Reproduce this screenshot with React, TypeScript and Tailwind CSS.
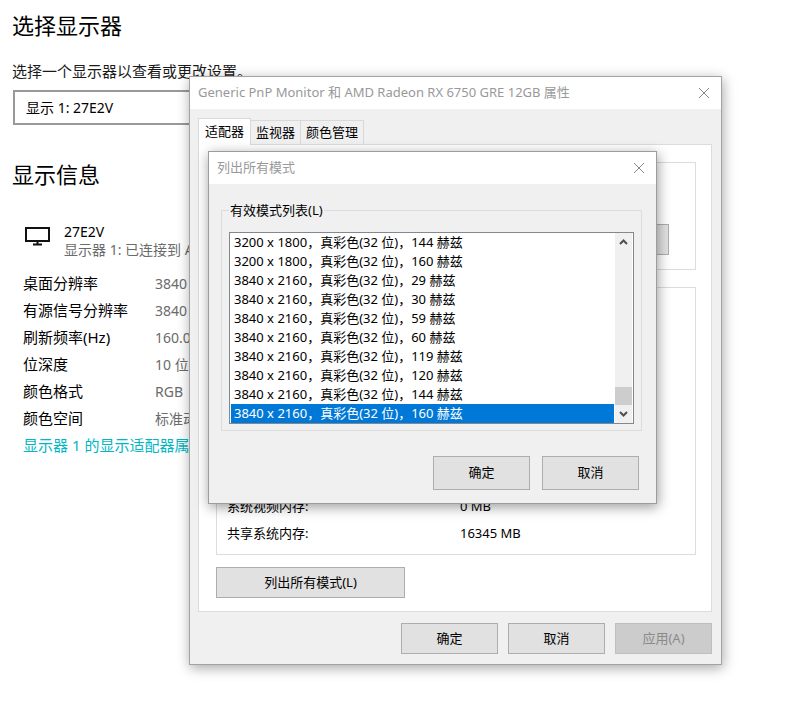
/**
 * Display settings page with the adapter property sheet and its
 * "list all modes" dialog open on top.
 */

import React, { useState } from "react";

interface DisplayRow {
  readonly label: string;
  readonly value: string;
}

const DISPLAY_ROWS: readonly DisplayRow[] = [
  { label: "桌面分辨率", value: "3840" },
  { label: "有源信号分辨率", value: "3840" },
  { label: "刷新频率(Hz)", value: "160.00" },
  { label: "位深度", value: "10 位" },
  { label: "颜色格式", value: "RGB" },
  { label: "颜色空间", value: "标准动态" },
];

const MEMORY_ROWS: readonly DisplayRow[] = [
  { label: "系统视频内存:", value: "0 MB" },
  { label: "共享系统内存:", value: "16345 MB" },
];

const TABS = ["适配器", "监视器", "颜色管理"] as const;

const MODES: readonly string[] = [
  "3200 x 1800，真彩色(32 位)，144 赫兹",
  "3200 x 1800，真彩色(32 位)，160 赫兹",
  "3840 x 2160，真彩色(32 位)，29 赫兹",
  "3840 x 2160，真彩色(32 位)，30 赫兹",
  "3840 x 2160，真彩色(32 位)，59 赫兹",
  "3840 x 2160，真彩色(32 位)，60 赫兹",
  "3840 x 2160，真彩色(32 位)，119 赫兹",
  "3840 x 2160，真彩色(32 位)，120 赫兹",
  "3840 x 2160，真彩色(32 位)，144 赫兹",
  "3840 x 2160，真彩色(32 位)，160 赫兹",
];

export default function App(): React.ReactElement {
  return (
    <div className="relative min-h-screen overflow-hidden bg-white text-black font-['Noto_Sans','Noto_Sans_CJK_SC',sans-serif]">
      <SettingsPage />
      <PropertySheet />
      <ModesDialog />
    </div>
  );
}

// ── SettingsPage ──────────────────────────────────────────────────────────────

function SettingsPage(): React.ReactElement {
  return (
    <main className="px-3 pt-[7px] text-[15px] leading-5">
      <h1 className="text-[22px] leading-9">选择显示器</h1>
      <label htmlFor="display" className="mt-[18px] block text-[#1a1a1a]">
        选择一个显示器以查看或更改设置。
      </label>
      <select
        id="display"
        className="mt-[9px] ml-px block h-[35px] w-72 appearance-none border-2 border-[#999999] bg-white px-[11px] text-sm"
      >
        <option>显示 1: 27E2V</option>
      </select>

      <h2 className="mt-[31px] text-[22px] leading-9">显示信息</h2>
      <div className="mt-[31px] flex h-9 gap-3.5 pl-[13px]">
        <MonitorIcon />
        <div className="text-sm leading-[18px] whitespace-nowrap">
          <p>27E2V</p>
          <p className="text-[#6b6b6b]">显示器 1: 已连接到 AMD</p>
        </div>
      </div>

      <dl className="mt-[11px] pl-[11px] leading-[27px]">
        {DISPLAY_ROWS.map((row) => (
          <div key={row.label} className="flex whitespace-nowrap">
            <dt className="w-33">{row.label}</dt>
            <dd className="text-sm leading-[27px] text-[#6b6b6b]">{row.value}</dd>
          </div>
        ))}
      </dl>
      <a href="#adapter" className="ml-[11px] leading-[27px] text-[#00b7c3]">
        显示器 1 的显示适配器属性
      </a>
    </main>
  );
}

function MonitorIcon(): React.ReactElement {
  return (
    <svg width="25" height="19" viewBox="0 0 25 19" className="mt-1" fill="none" stroke="#111" aria-hidden="true">
      <path d="M1 1H24V14H1Z" strokeWidth="2" />
      <path d="M12.5 15V17M8 17.5H17" strokeWidth="2" />
    </svg>
  );
}

// ── PropertySheet ─────────────────────────────────────────────────────────────

function PropertySheet(): React.ReactElement {
  const [activeTab, setActiveTab] = useState<string>(TABS[0]);

  return (
    <section
      aria-label="属性"
      className="absolute top-[76px] left-[189px] w-[533px] border border-[#a3a3a3] bg-[#f0f0f0] text-[13px] shadow-[1px_3px_12px_rgba(0,0,0,0.35)]"
    >
      <TitleBar title="Generic PnP Monitor 和 AMD Radeon RX 6750 GRE 12GB 属性" />

      <div className="pt-[9px] pr-[9px] pl-2">
        <div role="tablist" className="flex items-end">
          {TABS.map((tab) => (
            <button
              key={tab}
              type="button"
              role="tab"
              aria-selected={tab === activeTab}
              onClick={() => setActiveTab(tab)}
              className={
                tab === activeTab
                  ? "relative -mb-px h-[27px] border border-b-0 border-[#d9d9d9] bg-white px-1.5"
                  : "h-6 border border-b-0 border-l-0 border-[#d9d9d9] px-[5px]"
              }
            >
              {tab}
            </button>
          ))}
        </div>

        <div role="tabpanel" className="border border-[#dcdcdc] bg-white pt-[17px] pr-[15px] pb-[13px] pl-[17px]">
          <div className="flex h-[108px] items-center justify-end border border-[#dcdcdc] pt-[46px] pr-[26px]">
            <button type="button" aria-label="属性" className="h-[31px] w-24 border border-[#adadad] bg-[#e1e1e1]" />
          </div>
          <dl className="mt-[17px] flex h-[268px] flex-col justify-end border border-[#dcdcdc] px-2.5 pb-[7px] leading-[27px]">
            {MEMORY_ROWS.map((row) => (
              <div key={row.label} className="flex">
                <dt className="w-[233px]">{row.label}</dt>
                <dd>{row.value}</dd>
              </div>
            ))}
          </dl>
          <DialogButton className="mt-3 h-[31px] w-[189px]">列出所有模式(L)</DialogButton>
        </div>
      </div>

      <div className="flex justify-end gap-2.5 px-[9px] pt-[11px] pb-2.5">
        <DialogButton className="h-[31px] w-[97px]">确定</DialogButton>
        <DialogButton className="h-[31px] w-[97px]">取消</DialogButton>
        <DialogButton className="h-[31px] w-[97px]" disabled>
          应用(A)
        </DialogButton>
      </div>
    </section>
  );
}

// ── ModesDialog ───────────────────────────────────────────────────────────────

function ModesDialog(): React.ReactElement {
  const [selected, setSelected] = useState(MODES.length - 1);

  return (
    <section
      role="dialog"
      aria-label="列出所有模式"
      className="absolute top-[151px] left-[208px] w-[449px] border border-[#9c9c9c] bg-[#f0f0f0] text-[13px] shadow-[1px_3px_12px_rgba(0,0,0,0.4)]"
    >
      <TitleBar title="列出所有模式" />

      <fieldset className="mt-4 mr-3.5 ml-3 border border-[#dcdcdc] px-[7px] pb-1.5">
        <legend id="modes-label" className="px-px leading-5">
          有效模式列表(L)
        </legend>
        <div className="mt-3 flex border border-[#828790] bg-white px-px">
          <ul role="listbox" aria-labelledby="modes-label" className="min-w-0 flex-1">
            {MODES.map((mode, i) => (
              <li
                key={mode}
                role="option"
                aria-selected={i === selected}
                onClick={() => setSelected(i)}
                className={`px-[3px] leading-[19px] whitespace-nowrap ${
                  i === selected ? "bg-[#0078d7] text-white" : ""
                }`}
              >
                {mode}
              </li>
            ))}
          </ul>
          <div className="ml-px flex w-[17px] flex-col bg-[#f0f0f0]">
            <ScrollButton label="向上滚动" path="M1 6L4.5 2.5L8 6" />
            <div className="flex-1" />
            <div className="h-[18px] bg-[#cdcdcd]" />
            <ScrollButton label="向下滚动" path="M1 2L4.5 5.5L8 2" />
          </div>
        </div>
      </fieldset>

      <div className="flex justify-end gap-3 px-[17px] pt-[25px] pb-[13px]">
        <DialogButton className="h-[34px] w-[97px]">确定</DialogButton>
        <DialogButton className="h-[34px] w-[97px]">取消</DialogButton>
      </div>
    </section>
  );
}

// ── Shared pieces ─────────────────────────────────────────────────────────────

function TitleBar({ title }: { readonly title: string }): React.ReactElement {
  return (
    <header className="flex h-8 items-center justify-between bg-white pr-[11px] pl-2 text-[#999999]">
      <h2 className="whitespace-nowrap">{title}</h2>
      <button type="button" aria-label="关闭">
        <svg width="12" height="12" viewBox="0 0 12 12" fill="none" stroke="#888" aria-hidden="true">
          <path d="M1 1L11 11M11 1L1 11" />
        </svg>
      </button>
    </header>
  );
}

interface ScrollButtonProps {
  readonly label: string;
  readonly path: string;
}

function ScrollButton({ label, path }: ScrollButtonProps): React.ReactElement {
  return (
    <button type="button" aria-label={label} className="flex h-[18px] items-center justify-center">
      <svg width="9" height="8" viewBox="0 0 9 8" fill="none" stroke="#505050" strokeWidth="2" aria-hidden="true">
        <path d={path} />
      </svg>
    </button>
  );
}

interface DialogButtonProps {
  readonly children: React.ReactNode;
  readonly className: string;
  readonly disabled?: boolean;
}

function DialogButton({ children, className, disabled = false }: DialogButtonProps): React.ReactElement {
  return (
    <button
      type="button"
      disabled={disabled}
      className={`block border ${
        disabled ? "border-[#bfbfbf] bg-[#cccccc] text-[#8a8a8a]" : "border-[#adadad] bg-[#e1e1e1]"
      } ${className}`}
    >
      {children}
    </button>
  );
}
